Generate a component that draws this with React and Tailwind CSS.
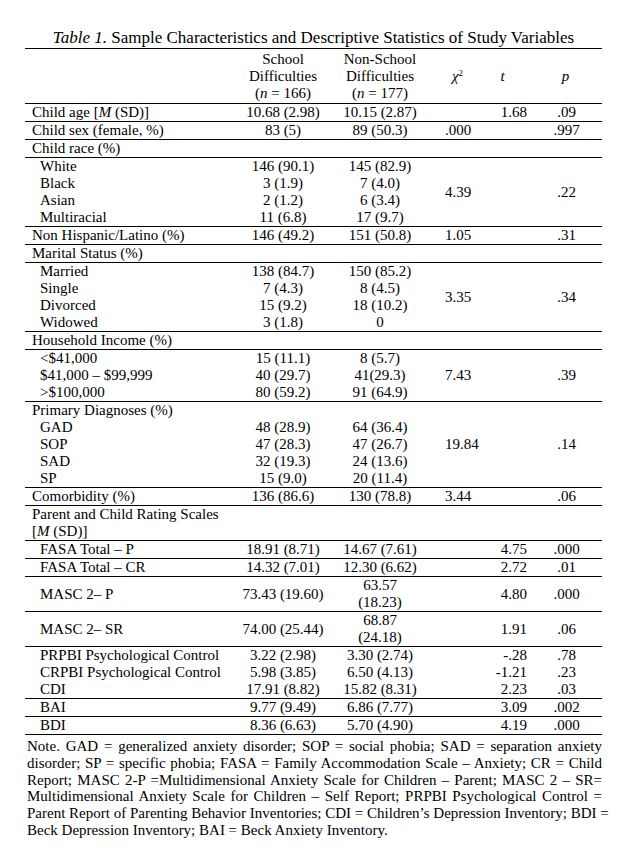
const GROUPS = [
  { rows: [{ label: <>Child age [<i>M</i> (SD)]</>, a: "10.68 (2.98)", b: "10.15 (2.87)" }], chi: "", t: "1.68", p: ".09" },
  { rows: [{ label: "Child sex (female, %)", a: "83 (5)", b: "89 (50.3)" }], chi: ".000", t: "", p: ".997" },
  {
    head: "Child race (%)",
    rows: [
      { label: "White", a: "146 (90.1)", b: "145 (82.9)" },
      { label: "Black", a: "3 (1.9)", b: "7 (4.0)" },
      { label: "Asian", a: "2 (1.2)", b: "6 (3.4)" },
      { label: "Multiracial", a: "11 (6.8)", b: "17 (9.7)" },
    ],
    chi: "4.39", t: "", p: ".22",
  },
  { rows: [{ label: "Non Hispanic/Latino (%)", a: "146 (49.2)", b: "151 (50.8)" }], chi: "1.05", t: "", p: ".31" },
  {
    head: "Marital Status (%)",
    rows: [
      { label: "Married", a: "138 (84.7)", b: "150 (85.2)" },
      { label: "Single", a: "7 (4.3)", b: "8 (4.5)" },
      { label: "Divorced", a: "15 (9.2)", b: "18 (10.2)" },
      { label: "Widowed", a: "3 (1.8)", b: "0" },
    ],
    chi: "3.35", t: "", p: ".34",
  },
  {
    head: "Household Income (%)",
    rows: [
      { label: "<$41,000", a: "15 (11.1)", b: "8 (5.7)" },
      { label: "$41,000 – $99,999", a: "40 (29.7)", b: "41(29.3)" },
      { label: ">$100,000", a: "80 (59.2)", b: "91 (64.9)" },
    ],
    chi: "7.43", t: "", p: ".39",
  },
  {
    head: "Primary Diagnoses (%)",
    open: true,
    rows: [
      { label: "GAD", a: "48 (28.9)", b: "64 (36.4)" },
      { label: "SOP", a: "47 (28.3)", b: "47 (26.7)" },
      { label: "SAD", a: "32 (19.3)", b: "24 (13.6)" },
      { label: "SP", a: "15 (9.0)", b: "20 (11.4)" },
    ],
    chi: "19.84", t: "", p: ".14",
  },
  { rows: [{ label: "Comorbidity (%)", a: "136 (86.6)", b: "130 (78.8)" }], chi: "3.44", t: "", p: ".06" },
];

const SCALES = [
  { label: "FASA Total – P", a: "18.91 (8.71)", b: "14.67 (7.61)", t: "4.75", p: ".000", line: true },
  { label: "FASA Total – CR", a: "14.32 (7.01)", b: "12.30 (6.62)", t: "2.72", p: ".01", line: true },
  { label: "MASC 2– P", a: "73.43 (19.60)", b: <>63.57<br />(18.23)</>, t: "4.80", p: ".000", line: true },
  { label: "MASC 2– SR", a: "74.00 (25.44)", b: <>68.87<br />(24.18)</>, t: "1.91", p: ".06", line: true },
  { label: "PRPBI Psychological Control", a: "3.22 (2.98)", b: "3.30 (2.74)", t: "-.28", p: ".78" },
  { label: "CRPBI Psychological Control", a: "5.98 (3.85)", b: "6.50 (4.13)", t: "-1.21", p: ".23" },
  { label: "CDI", a: "17.91 (8.82)", b: "15.82 (8.31)", t: "2.23", p: ".03", line: true },
  { label: "BAI", a: "9.77 (9.49)", b: "6.86 (7.77)", t: "3.09", p: ".002", line: true },
  { label: "BDI", a: "8.36 (6.63)", b: "5.70 (4.90)", t: "4.19", p: ".000", line: true },
];

const NOTE = [
  "Note. GAD = generalized anxiety disorder; SOP = social phobia; SAD = separation anxiety",
  "disorder; SP = specific phobia; FASA = Family Accommodation Scale – Anxiety; CR = Child",
  "Report; MASC 2-P =Multidimensional Anxiety Scale for Children – Parent; MASC 2 – SR=",
  "Multidimensional Anxiety Scale for Children – Self Report; PRPBI Psychological Control =",
  "Parent Report of Parenting Behavior Inventories; CDI = Children’s Depression Inventory; BDI =",
];

function Stats({ chi, t, p, span }) {
  return (
    <>
      <td rowSpan={span} className="pl-[16px] text-left">{chi}</td>
      <td rowSpan={span} className="pr-[8px] text-right">{t}</td>
      <td rowSpan={span} className="pr-[4px] text-center">{p}</td>
    </>
  );
}

function Group({ group }) {
  const { head, rows, chi, t, p, open } = group;
  if (!head) {
    const r = rows[0];
    return (
      <tr className="border-b border-black">
        <td className="pl-[7px]">{r.label}</td>
        <td className="text-center">{r.a}</td>
        <td className="text-center">{r.b}</td>
        <Stats chi={chi} t={t} p={p} />
      </tr>
    );
  }
  return (
    <>
      <tr className={open ? "" : "border-b border-black"}>
        <td className="pl-[7px]">{head}</td>
        <td />
        <td />
        {open ? <Stats chi={chi} t={t} p={p} span={rows.length + 1} /> : <><td /><td /><td /></>}
      </tr>
      {rows.map((r, i) => (
        <tr key={i} className={i === rows.length - 1 ? "border-b border-black" : ""}>
          <td className="pl-[15px]">{r.label}</td>
          <td className="text-center">{r.a}</td>
          <td className="text-center">{r.b}</td>
          {!open && i === 0 && <Stats chi={chi} t={t} p={p} span={rows.length} />}
        </tr>
      ))}
    </>
  );
}

export default function App() {
  return (
    <div className="w-[643px] min-h-[868px] bg-white text-black font-['Liberation_Serif','Times_New_Roman',serif]">
      <div className="w-[602px] pl-[25px] pt-[28px]">
        <p className="text-center text-[17px] leading-[20px]">
          <i>Table 1.</i> Sample Characteristics and Descriptive Statistics of Study Variables
        </p>
        <table className="w-full table-fixed border-collapse text-[15px] leading-[17px]">
          <colgroup>
            <col className="w-[210px]" />
            <col className="w-[96px]" />
            <col className="w-[98px]" />
            <col className="w-[49px]" />
            <col className="w-[57px]" />
            <col />
          </colgroup>
          <thead>
            <tr className="border-y border-black">
              <th />
              <th className="font-normal text-center pt-[2px] pb-[1px]">
                School<br />Difficulties<br />(<i>n</i> = 166)
              </th>
              <th className="font-normal text-center pt-[2px] pb-[1px]">
                Non-School<br />Difficulties<br />(<i>n</i> = 177)
              </th>
              <th className="font-normal text-left pl-[23px]">
                <i>χ</i><sup className="text-[9px]">2</sup>
              </th>
              <th className="font-normal italic text-center pr-[8px]">t</th>
              <th className="font-normal italic text-center pr-[6px]">p</th>
            </tr>
          </thead>
          <tbody>
            {GROUPS.map((g, i) => (
              <Group key={i} group={g} />
            ))}
            <tr className="border-b border-black">
              <td className="pl-[7px]">
                Parent and Child Rating Scales<br />[<i>M</i> (SD)]
              </td>
              <td /><td /><td /><td /><td />
            </tr>
            {SCALES.map((r, i) => (
              <tr key={i} className={r.line ? "border-b border-black" : ""}>
                <td className="pl-[15px]">{r.label}</td>
                <td className="text-center">{r.a}</td>
                <td className="text-center">{r.b}</td>
                <Stats chi="" t={r.t} p={r.p} />
              </tr>
            ))}
          </tbody>
        </table>
        <div className="pl-[2px] pt-[3px] text-[15px] leading-[16.8px]">
          {NOTE.map((line, i) => (
            <p key={i} className="text-justify [text-align-last:justify] whitespace-nowrap">{line}</p>
          ))}
          <p>Beck Depression Inventory; BAI = Beck Anxiety Inventory.</p>
        </div>
      </div>
    </div>
  );
}
